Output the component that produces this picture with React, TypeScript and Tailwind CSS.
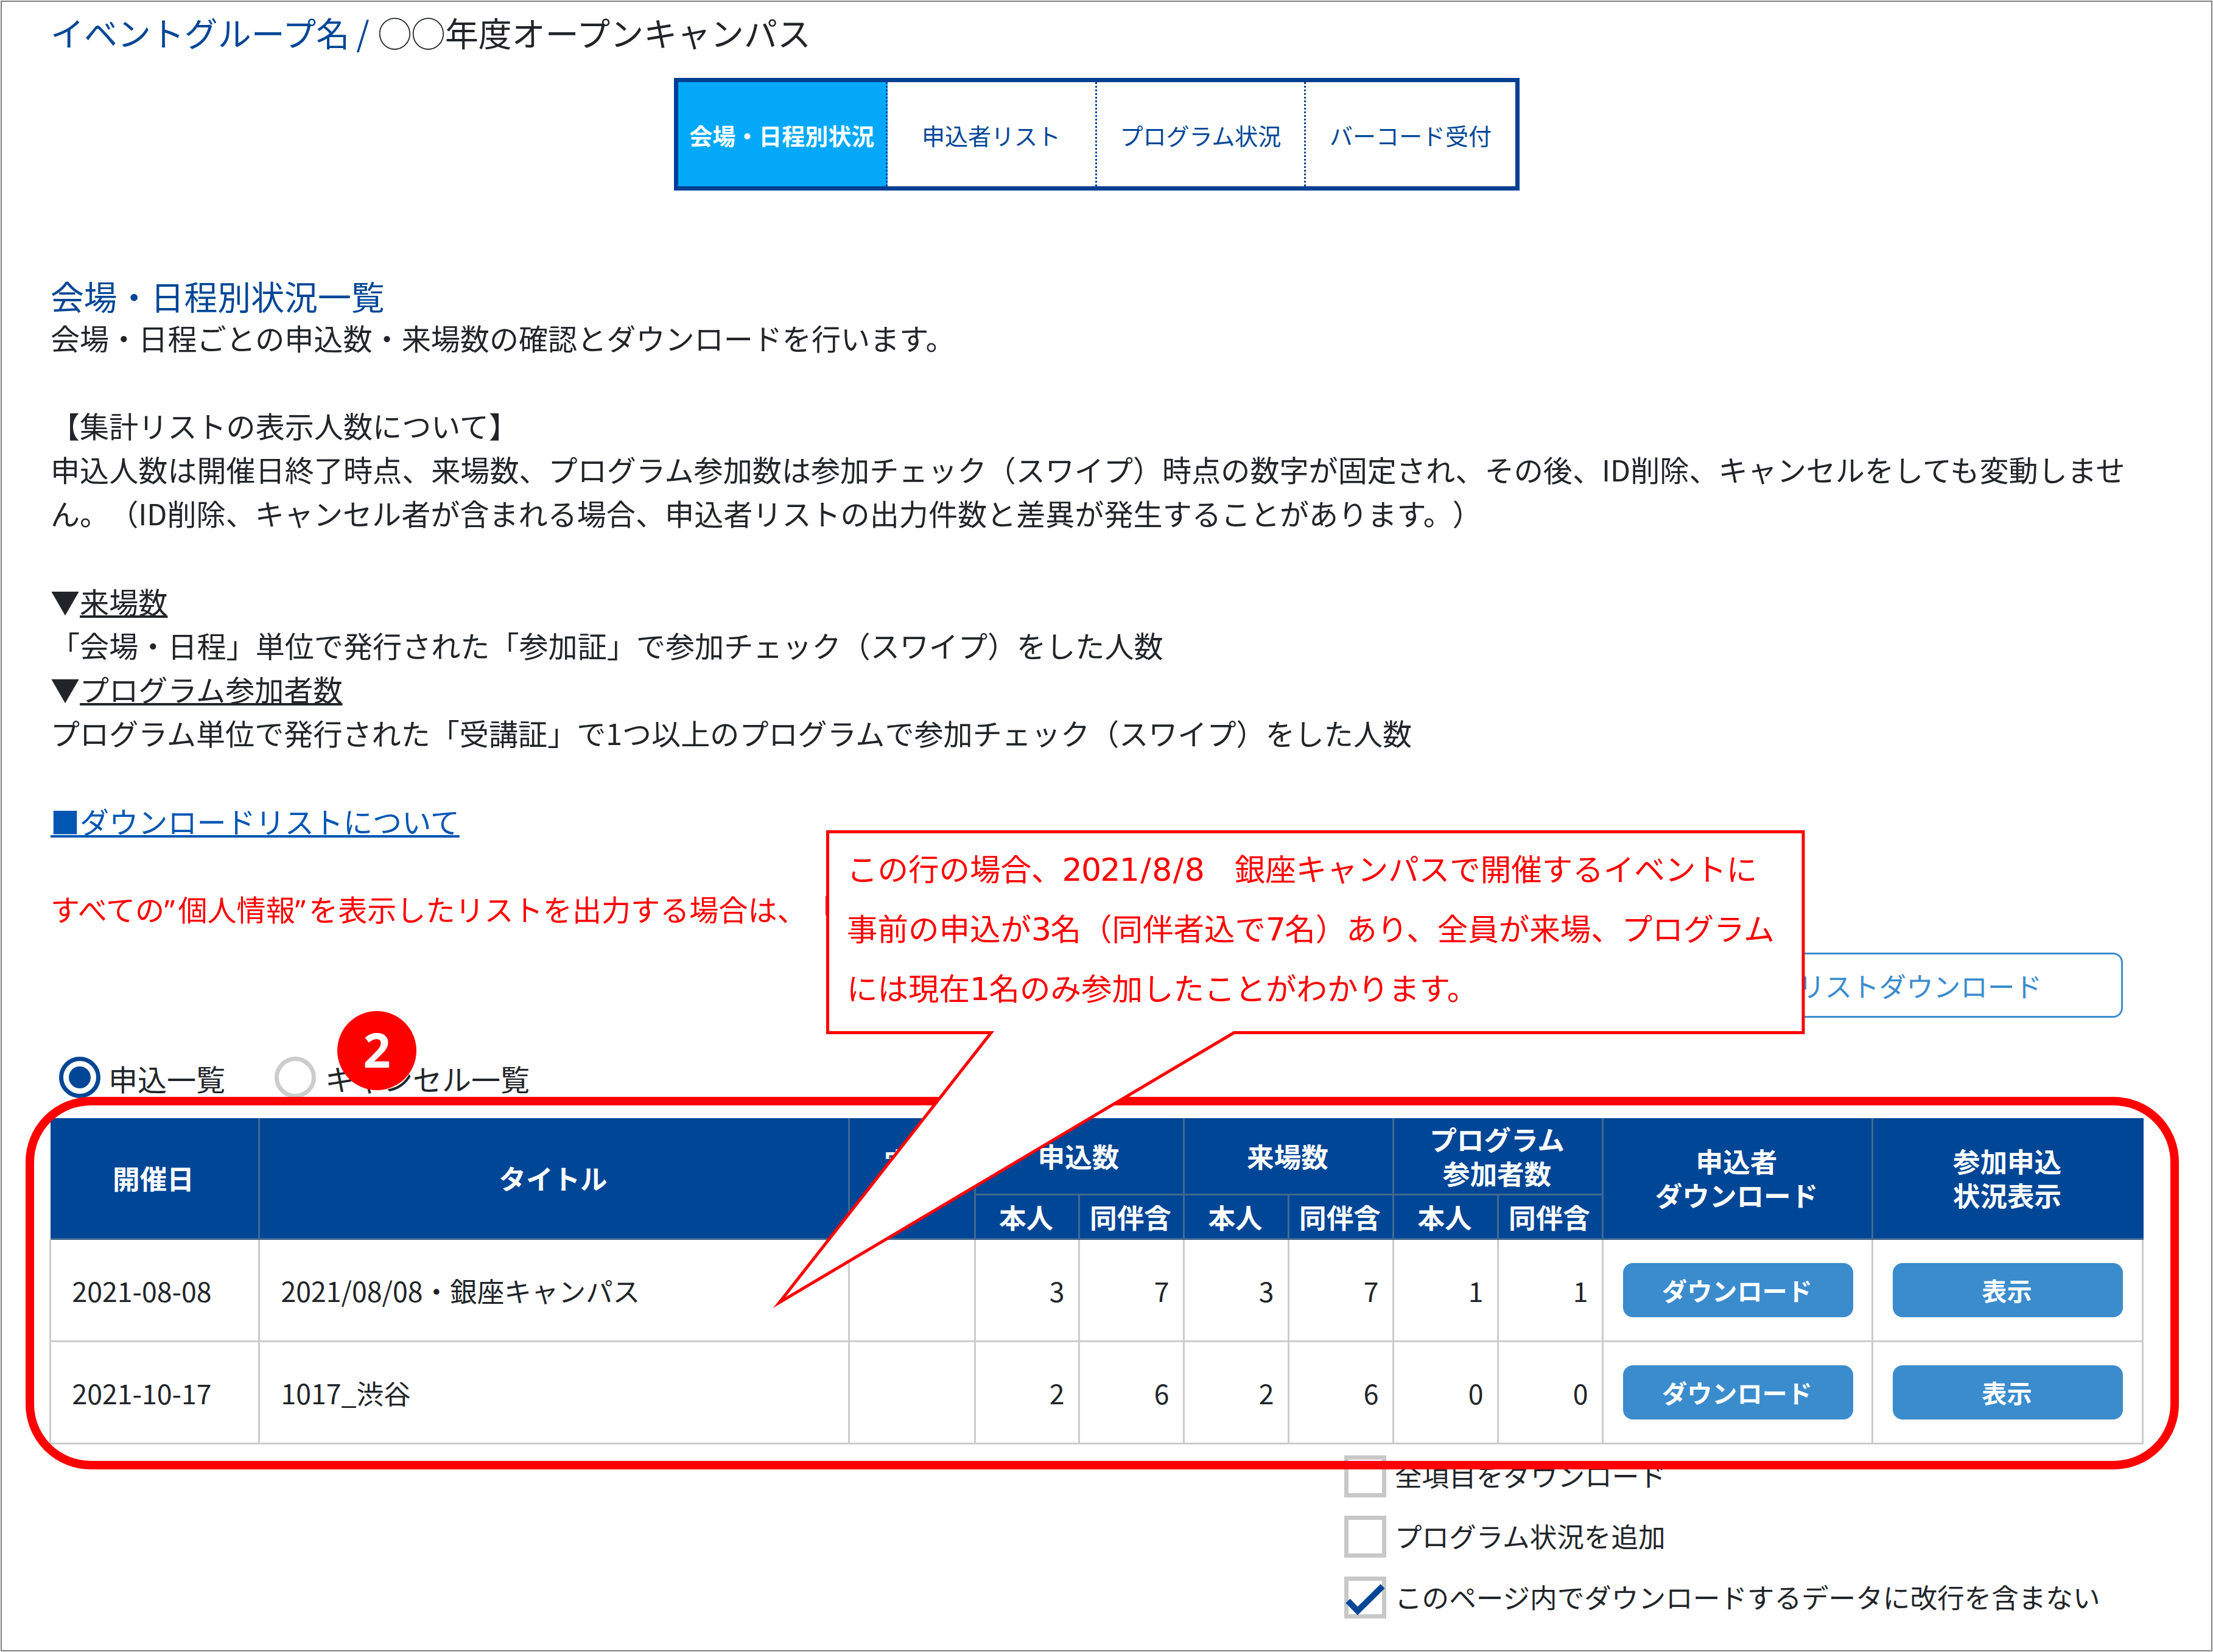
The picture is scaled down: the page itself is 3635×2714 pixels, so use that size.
import React from "react";

const tabs = ["会場・日程別状況", "申込者リスト", "プログラム状況", "バーコード受付"];

const rows = [
  { date: "2021-08-08", title: "2021/08/08・銀座キャンパス", counts: [3, 7, 3, 7, 1, 1] },
  { date: "2021-10-17", title: "1017_渋谷", counts: [2, 6, 2, 6, 0, 0] },
];

const bodyCols =
  "grid-cols-[343px_969px_207px_171px_172px_172px_172px_172px_172px_443px_447px]";
const headCols =
  "grid-cols-[341px_969px_207px_171px_172px_172px_172px_172px_172px_443px_446px]";

function Head({ className = "", children }: { className?: string; children?: React.ReactNode }) {
  return (
    <div className={`flex items-center justify-center border-[#41698f] pr-[2px] text-center ${className}`}>
      <span>{children}</span>
    </div>
  );
}

function Radio({ checked = false }: { checked?: boolean }) {
  return (
    <span
      className={`flex size-[68px] shrink-0 items-center justify-center rounded-full border-[7px] ${
        checked ? "border-[#004696]" : "border-[#cccccc]"
      }`}
    >
      {checked && <span className="size-[36px] rounded-full bg-[#004696]" />}
    </span>
  );
}

function Check({ label, checked = false }: { label: string; checked?: boolean }) {
  return (
    <div className="flex h-[69px] items-center gap-[14px]">
      <span className="flex size-[69px] shrink-0 border-[7px] border-[#c8c8c8]">
        {checked && (
          <svg viewBox="0 0 69 69" className="-m-[7px] size-[69px] shrink-0 overflow-visible">
            <path d="M6 40 L22 56.5 L63 16" fill="none" stroke="#004696" strokeWidth="10" />
          </svg>
        )}
      </span>
      <span className="pb-[4px] text-[44.6px] leading-[66px]">{label}</span>
    </div>
  );
}

function Line({ className = "", children }: { className?: string; children?: React.ReactNode }) {
  return <p className={`h-[72.2px] ${className}`}>{children}</p>;
}

function Quote() {
  return <span className='mr-[5px] font-["Noto_Sans"] leading-none'>”</span>;
}

function Num({ children }: { children: React.ReactNode }) {
  return <span className='font-["DejaVu_Sans"] text-[52px] leading-none tracking-[-1.7px]'>{children}</span>;
}

function Slash() {
  return <span className="mx-[3.2px]">/</span>;
}

export default function App() {
  return (
    <div className='relative h-[2714px] w-[3635px] overflow-hidden bg-white p-px font-["Noto_Sans_CJK_JP",sans-serif] text-[48px] leading-[72.2px] text-[#212529] [text-spacing-trim:space-all]'>
      <div className="flex h-full flex-col border-2 border-[#808080] pl-[80px]">
        <header className="mt-[9px] flex h-[80px] items-center text-[54.95px] leading-[80px]">
          <span className="text-[#004696]">イベントグループ名</span>
          <span className="ml-[11px] whitespace-pre text-[#004696]">/ </span>
          <span className="ml-[2px]">◯◯年度オープンキャンパス</span>
        </header>

        <nav className="ml-[1024px] mt-[35.5px] grid h-[185px] w-[1389px] shrink-0 grid-cols-4 border-[7px] border-[#003f92] text-[38px]">
          {tabs.map((t, i) => (
            <div
              key={t}
              className={`flex items-center justify-center whitespace-nowrap pt-[4px] ${
                i === 0 ? "bg-[#03a9f8] font-bold text-white" : "text-[#004696]"
              } ${i < 3 ? "border-r-[3px] border-dotted border-[#004696]" : ""}`}
            >
              {t}
            </div>
          ))}
        </nav>

        <h2 className="mt-[132.5px] h-[72px] shrink-0 text-[54.86px] leading-[80px] text-[#004696]">会場・日程別状況一覧</h2>
        <div className="mt-[0.6px] h-[1010.8px] shrink-0 whitespace-nowrap text-[48.1px]">
          <Line>会場・日程ごとの申込数・来場数の確認とダウンロードを行います。</Line>
          <Line />
          <Line>【集計リストの表示人数について】</Line>
          <Line>申込人数は開催日終了時点、来場数、プログラム参加数は参加チェック（スワイプ）時点の数字が固定され、その後、ID削除、キャンセルをしても変動しませ</Line>
          <Line>ん。（ID削除、キャンセル者が含まれる場合、申込者リストの出力件数と差異が発生することがあります。）</Line>
          <Line />
          <Line>▼<u>来場数</u></Line>
          <Line>「会場・日程」単位で発行された「参加証」で参加チェック（スワイプ）をした人数</Line>
          <Line>▼<u>プログラム参加者数</u></Line>
          <Line>プログラム単位で発行された「受講証」で1つ以上のプログラムで参加チェック（スワイプ）をした人数</Line>
          <Line />
          <Line><a className="text-[#0056b3] underline">■ダウンロードリストについて</a></Line>
          <Line />
          <Line className="text-[#ff0000]">
            すべての<Quote />個人情報<Quote />を表示したリストを出力する場合は、「
          </Line>
        </div>

        <div className="mr-[145px] mt-[37px] flex h-[107px] shrink-0 justify-end">
          <div className="flex w-[806px] items-center justify-end rounded-[16px] border-[3.4px] border-[#3b8ccd] pr-[130px] text-[44.57px] text-[#3b8ccd]">
            リストダウンロード
          </div>
        </div>

        <div className="ml-[14px] mt-[64px] flex h-[68px] shrink-0 items-center">
          <Radio checked />
          <span className="ml-[13px] w-[273px] pt-px">申込一覧</span>
          <Radio />
          <span className="ml-[15px] pt-px">キャンセル一覧</span>
        </div>

        <div className="-ml-[2.5px] mt-[32.4px] w-[3440px] shrink-0 text-[44.6px]">
          <div className={`${headCols} ml-[2px] grid h-[200px] grid-rows-[127px_70px] border-b-[3px] border-[#41698f] bg-[#004696] font-bold leading-[56px] text-white`}>
            <Head className="row-span-2">開催日</Head>
            <Head className="row-span-2 border-l-[3px]">タイトル</Head>
            <Head className="row-span-2 border-l-[3px]">定員<br />&nbsp;</Head>
            <Head className="col-span-2 border-b-[3px] border-l-[3px]">申込数</Head>
            <Head className="col-span-2 border-b-[3px] border-l-[3px]">来場数</Head>
            <Head className="col-span-2 border-b-[3px] border-l-[3px]">プログラム<br />参加者数</Head>
            <Head className="row-span-2 border-l-[3px]">申込者<br />ダウンロード</Head>
            <Head className="row-span-2 border-l-[3px]">参加申込<br />状況表示</Head>
            <Head className="border-l-[3px]">本人</Head>
            <Head className="border-l-[3px]">同伴含</Head>
            <Head className="border-l-[3px]">本人</Head>
            <Head className="border-l-[3px]">同伴含</Head>
            <Head className="border-l-[3px]">本人</Head>
            <Head className="border-l-[3px]">同伴含</Head>
          </div>
          {rows.map((r) => (
            <div key={r.date} className={`${bodyCols} grid h-[168px] border-b-[3px] border-r-[3px] border-[#cccccc]`}>
              <div className="flex items-center border-l-[3px] border-[#cccccc] pl-[35px] pt-[2px]">{r.date}</div>
              <div className="flex items-center border-l-[3px] border-[#cccccc] pl-[35px] pt-[2px]">{r.title}</div>
              <div className="border-l-[3px] border-[#cccccc]" />
              {r.counts.map((c, i) => (
                <div key={i} className="flex items-center justify-end border-l-[3px] border-[#cccccc] pr-[22px] pt-[2px]">{c}</div>
              ))}
              {["ダウンロード", "表示"].map((b) => (
                <div key={b} className="flex items-center border-l-[3px] border-[#cccccc] pl-[32px]">
                  <button className="h-[89px] w-[378px] rounded-[16px] bg-[#3b8ccd] pr-[2px] text-[41.14px] font-bold leading-[60px] text-white">{b}</button>
                </div>
              ))}
            </div>
          ))}
        </div>

        <div className="ml-[2125px] mt-[18px] flex flex-col gap-[30.7px]">
          <Check label="全項目をダウンロード" />
          <Check label="プログラム状況を追加" />
          <Check label="このページ内でダウンロードするデータに改行を含まない" checked />
        </div>
      </div>

      {/* annotations laid over the page */}
      <div className="absolute left-[42px] top-[1802px] h-[612px] w-[3537px] rounded-[107px] border-[14px] border-[#ff0000]" />
      <div className='absolute left-[554px] top-[1661px] flex size-[130px] items-center justify-center rounded-full bg-[#ff0000] pb-[6px] font-["Noto_Sans"] text-[79px] font-bold leading-none text-white'>
        2
      </div>
      <svg className="absolute left-0 top-0" width="3635" height="2714" viewBox="0 0 3635 2714">
        <path
          d="M1359.5 1366.5 H2962 V1696.5 H2027 L1280 2140 L1628 1696.5 H1359.5 Z"
          fill="#ffffff"
          stroke="#ff0000"
          strokeWidth="5"
          strokeMiterlimit="10"
        />
      </svg>
      <div className="absolute left-[1391px] top-[1376px] whitespace-pre text-[50.5px] leading-[98px] text-[#ff0000]">
        <p className="h-[98px]">この行の場合、<Num>2021<Slash />8<Slash />8</Num>　銀座キャンパスで開催するイベントに</p>
        <p className="h-[98px]">事前の申込が<Num>3</Num>名（同伴者込で<Num>7</Num>名）あり、全員が来場、プログラム</p>
        <p className="h-[98px]">には現在<Num>1</Num>名のみ参加したことがわかります。</p>
      </div>
    </div>
  );
}
